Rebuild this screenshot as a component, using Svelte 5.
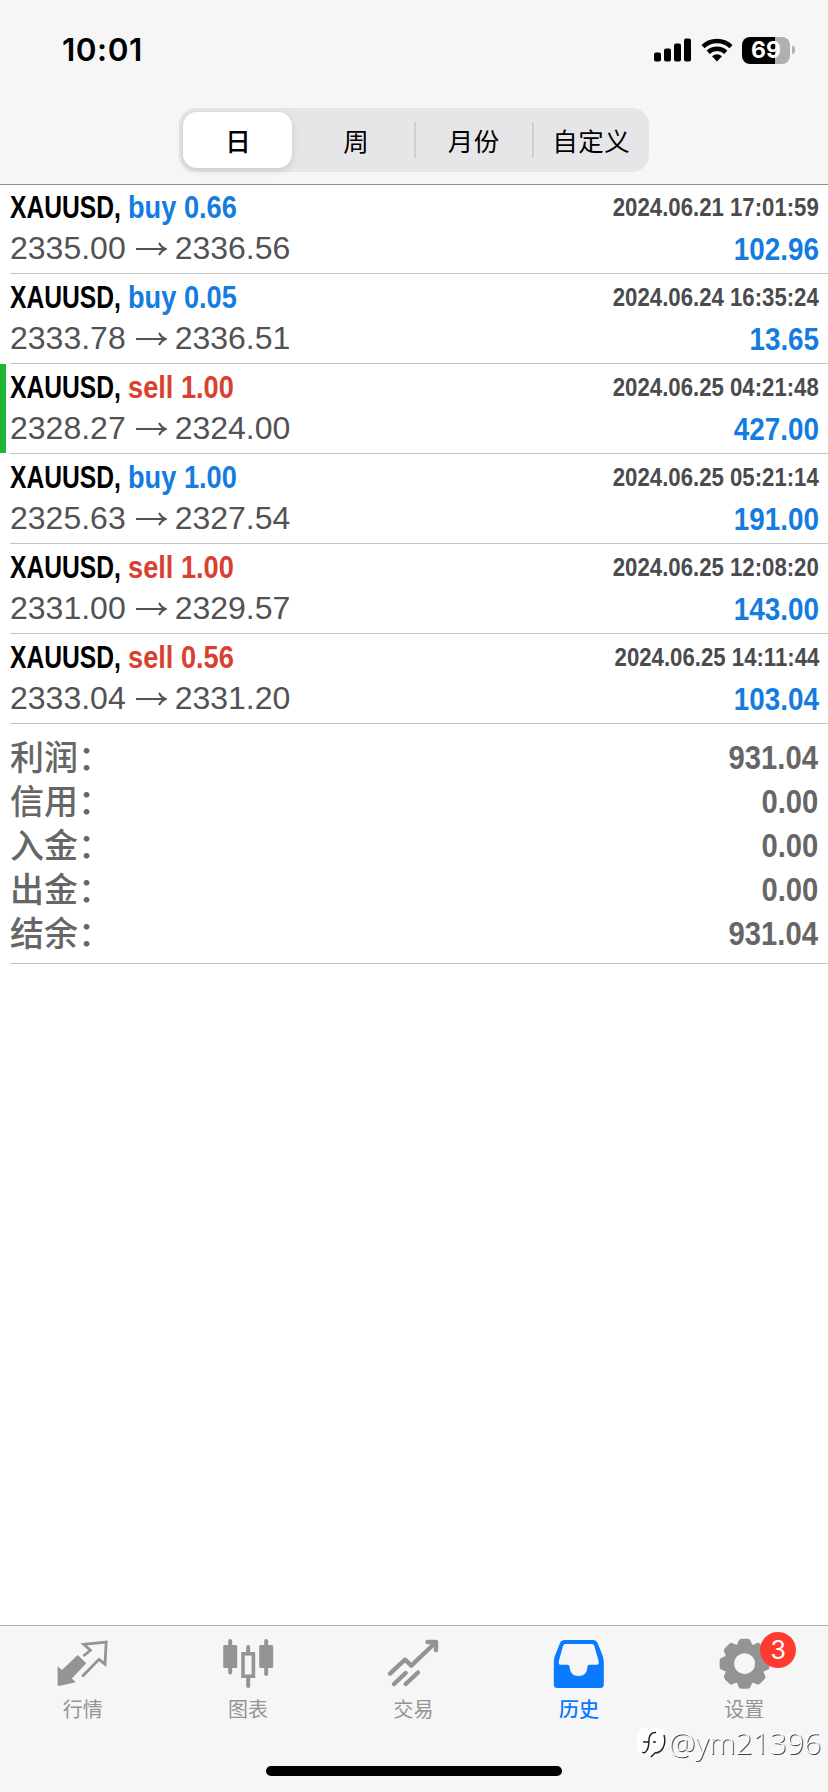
<script lang="ts">
  interface Deal {
    symbol: string;
    side: 'buy' | 'sell';
    volume: string;
    open: string;
    close: string;
    time: string;
    profit: string;
    marked?: boolean;
  }

  const periods = ['日', '周', '月份', '自定义'];
  let period = $state('日');

  const deals: Deal[] = [
    { symbol: 'XAUUSD', side: 'buy', volume: '0.66', open: '2335.00', close: '2336.56', time: '2024.06.21 17:01:59', profit: '102.96' },
    { symbol: 'XAUUSD', side: 'buy', volume: '0.05', open: '2333.78', close: '2336.51', time: '2024.06.24 16:35:24', profit: '13.65' },
    { symbol: 'XAUUSD', side: 'sell', volume: '1.00', open: '2328.27', close: '2324.00', time: '2024.06.25 04:21:48', profit: '427.00', marked: true },
    { symbol: 'XAUUSD', side: 'buy', volume: '1.00', open: '2325.63', close: '2327.54', time: '2024.06.25 05:21:14', profit: '191.00' },
    { symbol: 'XAUUSD', side: 'sell', volume: '1.00', open: '2331.00', close: '2329.57', time: '2024.06.25 12:08:20', profit: '143.00' },
    { symbol: 'XAUUSD', side: 'sell', volume: '0.56', open: '2333.04', close: '2331.20', time: '2024.06.25 14:11:44', profit: '103.04' },
  ];

  const totals = [
    { label: '利润：', value: '931.04' },
    { label: '信用：', value: '0.00' },
    { label: '入金：', value: '0.00' },
    { label: '出金：', value: '0.00' },
    { label: '结余：', value: '931.04' },
  ];

  const tabs = [
    { id: 'quotes', label: '行情' },
    { id: 'charts', label: '图表' },
    { id: 'trade', label: '交易' },
    { id: 'history', label: '历史' },
    { id: 'settings', label: '设置', badge: 3 },
  ];
  let tab = $state('history');

  const teeth = [0, 45, 90, 135, 180, 225, 270, 315];
</script>

<div class="screen">
  <header>
    <div class="status">
      <span class="clock">10:01</span>
      <div class="indicators">
        <svg class="signal" width="37" height="24" viewBox="0 0 37 24">
          <rect x="0" y="14.5" width="7" height="9" rx="2" />
          <rect x="10" y="10.5" width="7" height="13" rx="2" />
          <rect x="20" y="5.5" width="7" height="18" rx="2" />
          <rect x="30" y="0.5" width="7" height="23" rx="2" />
        </svg>
        <svg class="wifi" width="32" height="24" viewBox="0 0 32 24">
          <path d="M2 8.6A20.5 20.5 0 0 1 30 8.6" />
          <path d="M7.2 14.2A13 13 0 0 1 24.8 14.2" />
          <path class="dot" d="M11 18.2Q16 14.4 21 18.2L16 23.6Z" />
        </svg>
        <div class="battery"><span>69</span></div>
        <i class="nub"></i>
      </div>
    </div>
    <div class="segments">
      {#each periods as p}
        <button class:selected={period === p} onclick={() => (period = p)}>{p}</button>
      {/each}
    </div>
  </header>

  <main>
    {#each deals as deal}
      <div class="deal" class:marked={deal.marked}>
        <div class="info">
          <div class="title">
            <span class="symbol">{deal.symbol},</span>
            <span class="order {deal.side}">{deal.side} {deal.volume}</span>
          </div>
          <div class="prices">
            <span>{deal.open}</span>
            <svg width="31" height="14" viewBox="0 0 31 14">
              <path d="M0 7H29.5M23 1Q25.5 5.5 29.5 7Q25.5 8.5 23 13" />
            </svg>
            <span>{deal.close}</span>
          </div>
        </div>
        <div class="result">
          <span class="time">{deal.time}</span>
          <span class="profit">{deal.profit}</span>
        </div>
      </div>
    {/each}

    <div class="totals">
      {#each totals as row}
        <div class="total">
          <span class="label">{row.label}</span>
          <span class="value">{row.value}</span>
        </div>
      {/each}
    </div>
  </main>

  <nav>
    <div class="tabs">
      {#each tabs as t}
        <button class="tab" class:active={tab === t.id} onclick={() => (tab = t.id)}>
          <div class="icon">
            <svg width="52" height="52" viewBox="0 0 52 52">
              {#if t.id === 'quotes'}
                <path class="fill" d="M.6 28.2L5 32L20.7 16.9L29.3 25.3L14.9 40.5L18.7 44.3L2 48Q.6 48 .6 46.6Z" />
                <path class="line thin" d="M26.4 18L33.4 12.3L26.7 6.3L49.2 4L48 26.2L42 21.3L25.2 38.6" />
              {:else if t.id === 'charts'}
                <rect class="fill" x="1.2" y="7" width="14" height="23" rx="1.5" />
                <rect class="fill" x="6.2" y="1" width="4" height="35.5" rx="2" />
                <rect class="line" x="21" y="15.8" width="10.4" height="22.4" stroke-width="3.6" />
                <rect class="fill" x="24.2" y="7" width="4" height="9" rx="2" />
                <rect class="fill" x="24.2" y="38" width="4" height="12" rx="2" />
                <rect class="fill" x="37.2" y="7" width="14" height="23" rx="1.5" />
                <rect class="fill" x="42.2" y="1" width="4" height="37" rx="2" />
              {:else if t.id === 'trade'}
                <path class="line thick" d="M3 35.6L18 21.7L24.3 27.7L48 5M40.5 4H49V12" />
                <path class="line thick" d="M7 46L18.7 35M18.7 46L31 34.5" />
              {:else if t.id === 'history'}
                <path
                  class="fill"
                  fill-rule="evenodd"
                  d="M12 2H40Q43.3 2 44.6 5L49.8 18Q50.8 21 50.8 25V46.5Q50.8 50 47.3 50H4.3Q.8 50 .8 46.5V25Q.8 21 1.8 18L7 5Q8.3 2 12 2ZM12.2 6Q10.8 6 10.2 7.5L5.8 23Q5.2 26.7 7.5 26.7H14.5Q16.5 26.7 16.5 28.5Q17 38 25.5 38Q34 38 34.5 28.5Q34.5 26.7 36.5 26.7H44Q46.2 26.7 45.6 23L41.2 7.5Q40.6 6 39.2 6Z"
                />
              {:else}
                <g class="fill" transform="translate(26.6 25.7)">
                  {#each teeth as angle}
                    <path d="M-9.5 -16Q-7 -19.5 -6.2 -22.5Q-5.5 -25 -3 -25H3Q5.5 -25 6.2 -22.5Q7 -19.5 9.5 -16Z" transform="rotate({angle})" />
                  {/each}
                  <circle r="19.5" />
                  <circle class="hole" r="10.5" />
                </g>
              {/if}
            </svg>
            {#if t.badge}
              <span class="badge">{t.badge}</span>
            {/if}
          </div>
          <span class="caption">{t.label}</span>
        </button>
      {/each}
    </div>
    <div class="home-bar"></div>
    <div class="watermark">
      <svg width="32" height="32" viewBox="0 0 32 32">
        <path class="blob" d="M9 1H21Q29 1 29 10V18Q29 25 22 26L16 30V26H12L8 28Q0 26 1 18V9Q2 1 9 1Z" />
        <path class="edge" d="M7 15H12.5M11 23Q9 27 6 25M11 23Q13 20 13 12Q14 5 20 5.5M17 15H20M28 8Q30 15 27 21Q24 26 19 26L15 30" />
      </svg>
      <span>@ym21396</span>
    </div>
  </nav>
</div>

<style>
  :global(body) {
    background: #fff;
  }

  .screen {
    display: flex;
    flex-direction: column;
    width: 828px;
    height: 1792px;
    overflow: hidden;
    font-family: "Liberation Sans", "Noto Sans CJK SC", sans-serif;
  }

  button {
    border: 0;
    padding: 0;
    margin: 0;
    background: none;
    color: inherit;
    font: inherit;
  }

  header {
    box-sizing: border-box;
    height: 185px;
    flex-shrink: 0;
    background: #f6f6f6;
    border-bottom: 1px solid #8e8e8e;
  }

  .status {
    display: flex;
    justify-content: space-between;
    align-items: center;
    height: 100px;
    padding: 0 33px 0 62px;
    box-sizing: border-box;
  }

  .clock {
    font: 600 31.5px/40px Inter, sans-serif;
    letter-spacing: 0.5px;
  }

  .indicators {
    display: flex;
    align-items: center;
  }

  .wifi {
    margin: 0 9px 0 10px;
    fill: none;
    stroke: #000;
    stroke-width: 4.6;
  }

  .wifi .dot {
    fill: #000;
    stroke: none;
  }

  .battery {
    width: 48px;
    height: 27px;
    border-radius: 8px;
    background: linear-gradient(to right, #000 33px, #b0b0b0 33px);
    color: #fff;
    font: 700 23px/27px Inter, sans-serif;
    text-align: center;
  }

  .nub {
    width: 3px;
    height: 8px;
    margin-left: 2px;
    border-radius: 0 4px 4px 0;
    background: #b0b0b0;
  }

  .segments {
    display: grid;
    grid-template-columns: repeat(4, 1fr);
    box-sizing: border-box;
    width: 470px;
    height: 64px;
    margin: 8px auto 0;
    border-radius: 17px;
    background: #e6e6e8;
  }

  .segments button {
    position: relative;
    padding-left: 2px;
    font: 400 25.5px/58px "Noto Sans CJK SC", sans-serif;
    letter-spacing: 0.5px;
  }

  .segments button.selected {
    margin: 4px 5px 4px 4px;
    border-radius: 14px;
    background: #fff;
    font-weight: 500;
    line-height: 50px;
    box-shadow: 0 2px 7px rgba(0, 0, 0, 0.14);
  }

  .segments button:nth-child(n + 3)::before {
    content: '';
    position: absolute;
    left: 0;
    top: 14px;
    width: 2px;
    height: 36px;
    background: #d0d0d3;
  }

  main {
    flex: 1;
    margin-top: -1px;
  }

  .deal {
    display: flex;
    justify-content: space-between;
    box-sizing: border-box;
    height: 90px;
    padding: 3px 9px 0 10px;
    background: linear-gradient(#c4c4c6, #c4c4c6) 10px 100% / 100% 1px no-repeat;
  }

  .deal.marked {
    background:
      linear-gradient(#1db534, #1db534) 0 0 / 6px 89px no-repeat,
      linear-gradient(#c4c4c6, #c4c4c6) 10px 100% / 100% 1px no-repeat;
  }

  .title {
    display: flex;
    height: 40px;
    font-size: 32px;
    font-weight: 700;
    line-height: 40px;
    white-space: nowrap;
  }

  /* condensed face made from the regular width */
  .symbol {
    width: 118px;
    transform: scaleX(0.77);
    transform-origin: left;
  }

  .order {
    transform: scaleX(0.85);
    transform-origin: left;
  }

  .buy {
    color: #147be0;
  }

  .sell {
    color: #d8402f;
  }

  .prices {
    display: flex;
    align-items: center;
    height: 42px;
    font-size: 32px;
    line-height: 42px;
    color: #525255;
  }

  .prices svg {
    margin: 2px 8px 0 10px;
    fill: none;
    stroke: #525255;
    stroke-width: 2;
  }

  .result {
    display: flex;
    flex-direction: column;
    align-items: flex-end;
    font-weight: 700;
    white-space: nowrap;
  }

  .time {
    font-size: 25.5px;
    line-height: 40px;
    color: #4b4b4e;
    transform: scaleX(0.87);
    transform-origin: right;
  }

  .profit {
    font-size: 32px;
    line-height: 44px;
    color: #147be0;
    transform: scaleX(0.87);
    transform-origin: right;
  }

  .totals {
    box-sizing: border-box;
    height: 240px;
    padding: 11px 10px 0;
    background: linear-gradient(#c4c4c6, #c4c4c6) 10px 100% / 100% 1px no-repeat;
    color: #666;
  }

  .total {
    display: flex;
    justify-content: space-between;
    height: 44px;
    line-height: 44px;
  }

  .label {
    font: 500 34px/47px "Liberation Sans", "Noto Sans CJK SC", sans-serif;
  }

  .value {
    font-size: 33px;
    font-weight: 700;
    line-height: 46px;
    transform: scaleX(0.885);
    transform-origin: right;
  }

  nav {
    position: relative;
    box-sizing: border-box;
    height: 167px;
    border-top: 1px solid #b2b2b2;
    background: #f6f6f6;
  }

  .tabs {
    display: grid;
    grid-template-columns: repeat(5, 1fr);
    padding: 12px 1px 0 0;
  }

  .tab {
    display: flex;
    flex-direction: column;
    align-items: center;
    color: #949494;
  }

  .tab.active {
    color: #0a7aff;
  }

  .icon {
    position: relative;
    width: 52px;
    height: 52px;
  }

  .icon svg {
    display: block;
  }

  .fill {
    fill: currentColor;
  }

  .line {
    fill: none;
    stroke: currentColor;
  }

  .thin {
    stroke-width: 2.8;
  }

  .thick {
    stroke-width: 4.4;
    stroke-linecap: round;
    stroke-linejoin: round;
  }

  .hole {
    fill: #f6f6f6;
  }

  .badge {
    position: absolute;
    left: 42px;
    top: -6px;
    width: 36px;
    height: 36px;
    border-radius: 50%;
    background: #ff3b30;
    color: #fff;
    font: 400 25px/36px Inter, sans-serif;
    text-align: center;
  }

  .caption {
    margin-top: 5px;
    font: 400 20px/28px "Noto Sans CJK SC", sans-serif;
  }

  .active .caption {
    font-weight: 500;
  }

  .home-bar {
    position: absolute;
    left: 266px;
    bottom: 16px;
    width: 296px;
    height: 10px;
    border-radius: 5px;
    background: #000;
  }

  .watermark {
    position: absolute;
    right: 7px;
    top: 101px;
    display: flex;
    align-items: center;
    gap: 1px;
    color: #fff;
    font: 300 30px/32px "Open Sans", sans-serif;
    text-shadow: 1px 1px 0 #444;
  }

  .blob {
    fill: #fff;
  }

  .edge {
    fill: none;
    stroke: #222;
    stroke-width: 1.5;
  }
</style>
